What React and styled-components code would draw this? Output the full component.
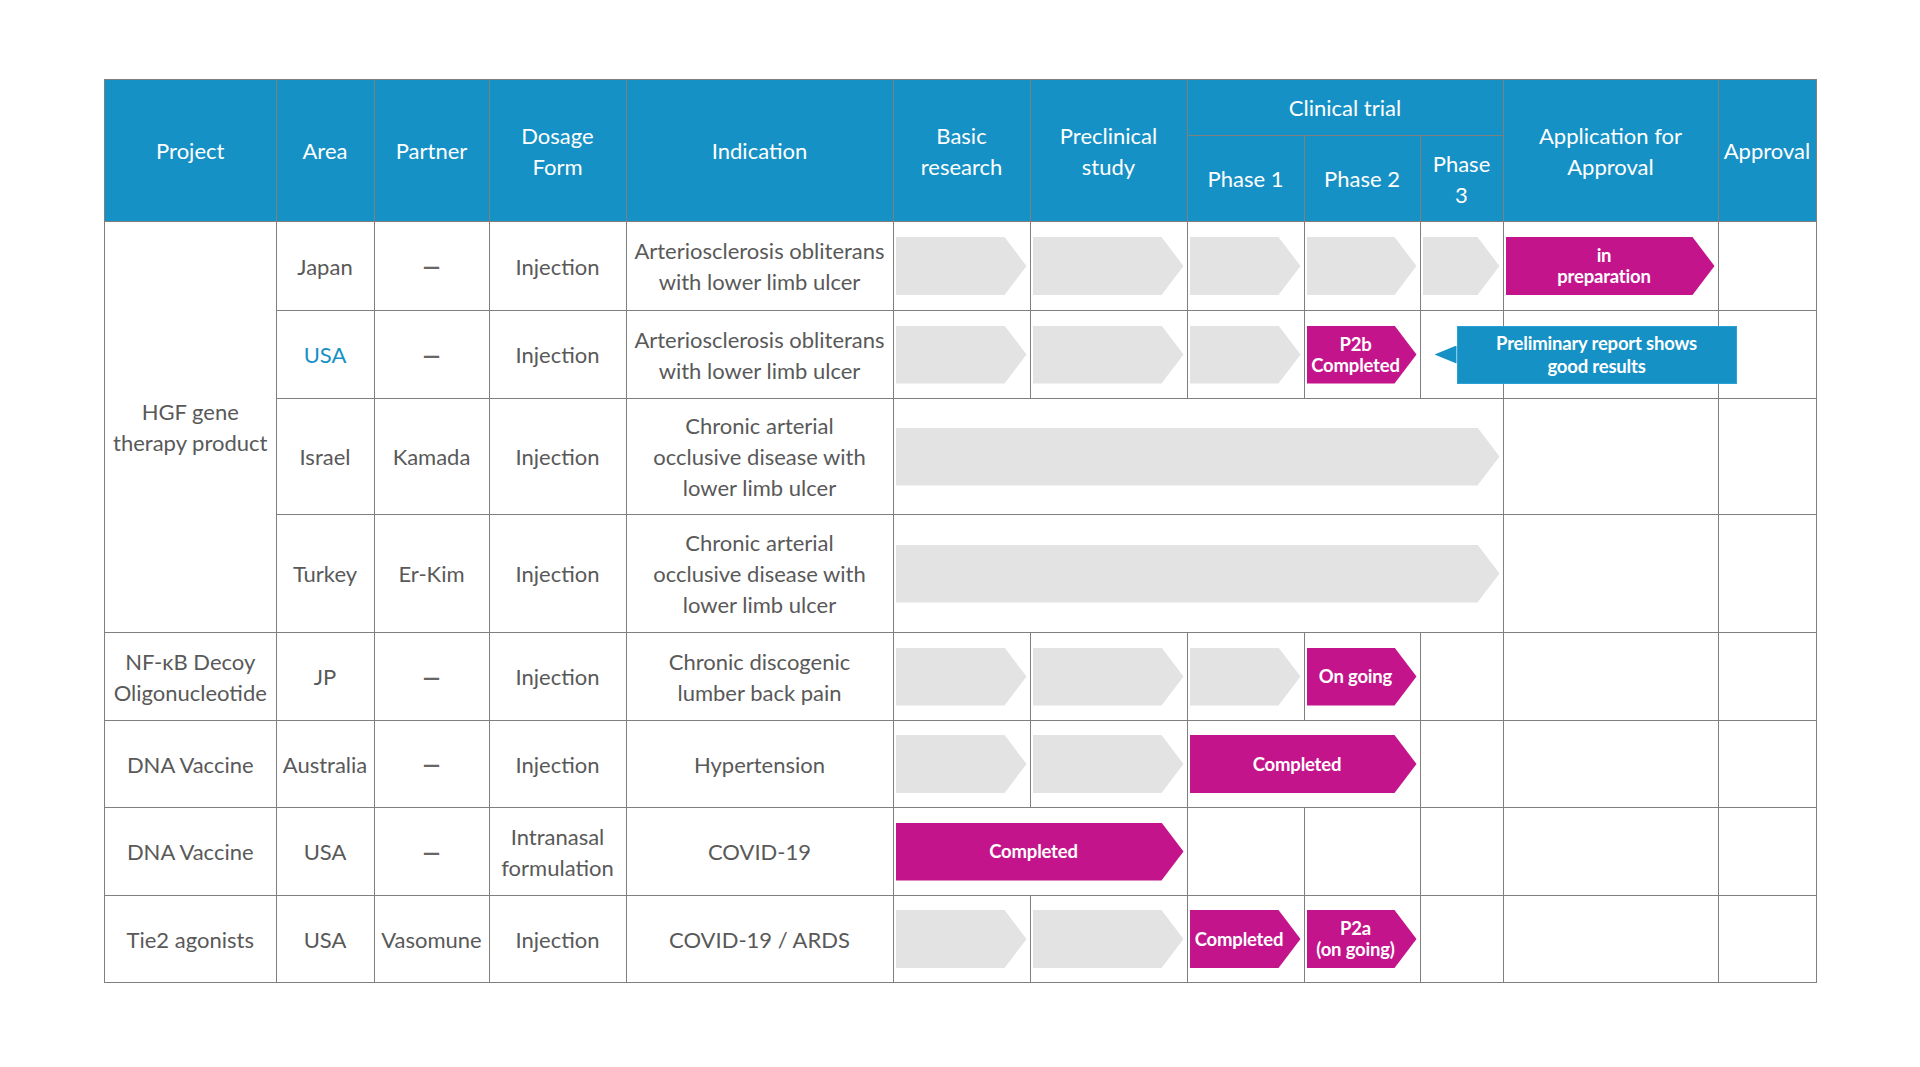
import React from "react";
import styled, { createGlobalStyle } from "styled-components";

const GlobalStyle = createGlobalStyle`
  html, body {
    margin: 0;
    padding: 0;
    background: #ffffff;
  }
  body {
    font-family: "Source Sans Pro", "Lato", "Liberation Sans", sans-serif;
  }
`;

const BLUE = "#1591c6";
const MAGENTA = "#c4148c";
const GRAY = "#e3e3e3";
const LINE = "#7f7f7f";

const Page = styled.div`
  width: 1920px;
  height: 1067px;
  padding: 79px 0 0 104px;
  box-sizing: border-box;
`;

const Table = styled.table`
  width: 1712px;
  table-layout: fixed;
  border-collapse: collapse;
  border: 1px solid ${LINE};
`;

const HeadCell = styled.th`
  background: ${BLUE};
  color: #ffffff;
  font-weight: 400;
  font-size: 22px;
  line-height: 31px;
  text-align: center;
  vertical-align: middle;
  border: 1px solid ${LINE};
  padding: 0;
  height: ${(p) => p.$h || 0}px;
`;

const Row = styled.tr`
  height: ${(p) => p.$h}px;
`;

const Cell = styled.td`
  color: ${(p) => (p.$blue ? BLUE : "#595959")};
  font-size: 22px;
  line-height: 31px;
  text-align: center;
  vertical-align: middle;
  border: 1px solid ${LINE};
  padding: 0;
`;

const Dash = styled.span`
  font-family: "DejaVu Sans", sans-serif;
  font-size: 17px;
  font-weight: 700;
  color: #666666;
`;

const StageCell = styled.td`
  border: 1px solid ${LINE};
  padding: 0 3px 0 2px;
  vertical-align: middle;
  position: relative;
`;

const Arrow = styled.div`
  height: 58px;
  background: ${(p) => (p.$tone === "done" ? MAGENTA : GRAY)};
  clip-path: polygon(0 0, calc(100% - 22px) 0, 100% 50%, calc(100% - 22px) 100%, 0 100%);
  display: flex;
  align-items: center;
  justify-content: center;
  padding-right: 12px;
  box-sizing: border-box;
  color: #ffffff;
  font-weight: 700;
  font-size: 18.5px;
  line-height: 21px;
  letter-spacing: -0.2px;
  text-align: center;
`;

const Callout = styled.div`
  position: absolute;
  left: 14px;
  top: 50%;
  transform: translateY(-50%);
  display: flex;
  align-items: center;
  z-index: 2;
`;

const Pointer = styled.div`
  width: 22px;
  height: 18px;
  background: ${BLUE};
  clip-path: polygon(0 50%, 100% 0, 100% 100%);
`;

const Bubble = styled.div`
  width: 280px;
  height: 58px;
  background: ${BLUE};
  border: 1px solid #2aa0d4;
  box-sizing: border-box;
  color: #ffffff;
  font-weight: 700;
  font-size: 18.5px;
  line-height: 23px;
  letter-spacing: -0.2px;
  display: flex;
  align-items: center;
  justify-content: center;
  text-align: center;
`;

const widths = [171.5, 98, 115, 137, 267, 137, 157, 117, 116, 83, 215, 98];

const lines = (t) =>
  t.split("\n").map((s, i, a) => (
    <React.Fragment key={i}>
      {s}
      {i < a.length - 1 && <br />}
    </React.Fragment>
  ));

const G = { tone: "plan" };
const done = (label, span = 1) => ({ tone: "done", label, span });
const none = { tone: null };
const DASH = "—";

const rows = [
  {
    h: 89,
    project: { text: "HGF gene\ntherapy product", span: 4 },
    area: "Japan",
    partner: DASH,
    form: "Injection",
    ind: "Arteriosclerosis obliterans\nwith lower limb ulcer",
    stages: [G, G, G, G, G, done("in\npreparation"), none],
  },
  {
    h: 88,
    area: "USA",
    blue: true,
    partner: DASH,
    form: "Injection",
    ind: "Arteriosclerosis obliterans\nwith lower limb ulcer",
    stages: [G, G, G, done("P2b\nCompleted"), { tone: null, callout: "Preliminary report shows\ngood results" }, none, none],
  },
  {
    h: 116,
    area: "Israel",
    partner: "Kamada",
    form: "Injection",
    ind: "Chronic arterial\nocclusive disease with\nlower limb ulcer",
    stages: [{ tone: "plan", span: 5 }, none, none],
  },
  {
    h: 118,
    area: "Turkey",
    partner: "Er-Kim",
    form: "Injection",
    ind: "Chronic arterial\nocclusive disease with\nlower limb ulcer",
    stages: [{ tone: "plan", span: 5 }, none, none],
  },
  {
    h: 88,
    project: { text: "NF-κB Decoy\nOligonucleotide" },
    area: "JP",
    partner: DASH,
    form: "Injection",
    ind: "Chronic discogenic\nlumber back pain",
    stages: [G, G, G, done("On going"), none, none, none],
  },
  {
    h: 87,
    project: { text: "DNA Vaccine" },
    area: "Australia",
    partner: DASH,
    form: "Injection",
    ind: "Hypertension",
    stages: [G, G, done("Completed", 2), none, none, none],
  },
  {
    h: 88,
    project: { text: "DNA Vaccine" },
    area: "USA",
    partner: DASH,
    form: "Intranasal\nformulation",
    ind: "COVID-19",
    stages: [done("Completed", 2), none, none, none, none, none],
  },
  {
    h: 87,
    project: { text: "Tie2 agonists" },
    area: "USA",
    partner: "Vasomune",
    form: "Injection",
    ind: "COVID-19 / ARDS",
    stages: [G, G, done("Completed"), done("P2a\n(on going)"), none, none, none],
  },
];

const Stage = ({ s }) => (
  <StageCell colSpan={s.span || 1}>
    {s.tone && <Arrow $tone={s.tone}>{s.label && lines(s.label)}</Arrow>}
    {s.callout && (
      <Callout>
        <Pointer />
        <Bubble>{lines(s.callout)}</Bubble>
      </Callout>
    )}
  </StageCell>
);

const App = () => (
  <>
    <GlobalStyle />
    <Page>
      <Table>
        <colgroup>
          {widths.map((w, i) => (
            <col key={i} style={{ width: w }} />
          ))}
        </colgroup>
        <thead>
          <tr>
            <HeadCell rowSpan={2}>Project</HeadCell>
            <HeadCell rowSpan={2}>Area</HeadCell>
            <HeadCell rowSpan={2}>Partner</HeadCell>
            <HeadCell rowSpan={2}>Dosage<br />Form</HeadCell>
            <HeadCell rowSpan={2}>Indication</HeadCell>
            <HeadCell rowSpan={2}>Basic<br />research</HeadCell>
            <HeadCell rowSpan={2}>Preclinical<br />study</HeadCell>
            <HeadCell colSpan={3} $h={55}>Clinical trial</HeadCell>
            <HeadCell rowSpan={2}>Application for<br />Approval</HeadCell>
            <HeadCell rowSpan={2}>Approval</HeadCell>
          </tr>
          <tr>
            <HeadCell $h={85}>Phase 1</HeadCell>
            <HeadCell $h={85}>Phase 2</HeadCell>
            <HeadCell $h={85}>Phase<br />3</HeadCell>
          </tr>
        </thead>
        <tbody>
          {rows.map((r, i) => (
            <Row key={i} $h={r.h}>
              {r.project && <Cell rowSpan={r.project.span || 1}>{lines(r.project.text)}</Cell>}
              <Cell $blue={r.blue}>{r.area}</Cell>
              <Cell>{r.partner === DASH ? <Dash>{DASH}</Dash> : r.partner}</Cell>
              <Cell>{lines(r.form)}</Cell>
              <Cell>{lines(r.ind)}</Cell>
              {r.stages.map((s, j) => (
                <Stage key={j} s={s} />
              ))}
            </Row>
          ))}
        </tbody>
      </Table>
    </Page>
  </>
);

export default App;
